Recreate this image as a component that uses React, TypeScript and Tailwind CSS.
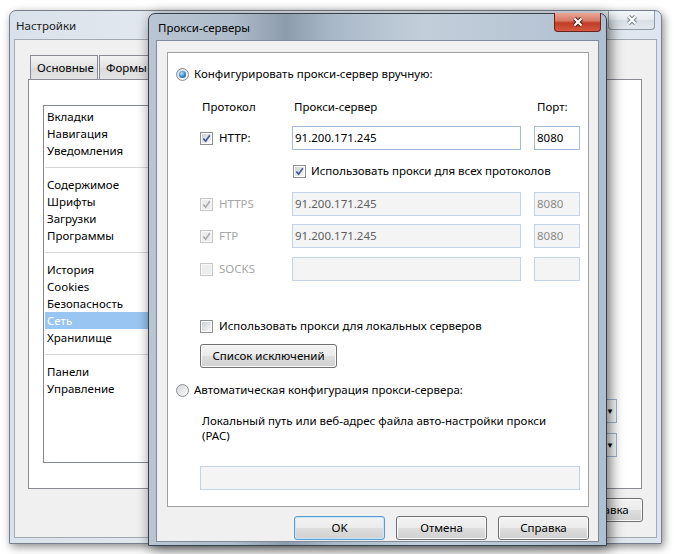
import React from "react";

const ui = "font-['Segoe_UI','Noto_Sans',sans-serif] text-[11.5px] leading-[16px]";

function CheckBox({ checked = false, disabled = false }: { checked?: boolean; disabled?: boolean }) {
  return (
    <span
      className={`flex h-[13px] w-[13px] shrink-0 items-center justify-center border ${
        disabled ? "border-[#c8c8c8] bg-[#f6f6f6]" : "border-[#8e8f8f] bg-white"
      }`}
    >
      <span
        className={`flex h-[9px] w-[9px] items-center justify-center ${
          disabled ? "bg-[#eeeeee]" : "bg-gradient-to-br from-[#cdd1d7] to-[#f8f8f8]"
        }`}
      >
        {checked && (
          <svg viewBox="0 0 9 9" className="h-[9px] w-[9px]">
            <path
              d="M1.3 4.4 L3.6 7.1 L7.8 1.3"
              fill="none"
              stroke={disabled ? "#a9a9a9" : "#3d5a95"}
              strokeWidth="1.6"
            />
          </svg>
        )}
      </span>
    </span>
  );
}

function Radio({ checked = false }: { checked?: boolean }) {
  return (
    <span className="flex h-[13px] w-[13px] shrink-0 items-center justify-center rounded-full border border-[#8b8d8f] bg-gradient-to-br from-[#d3d6db] to-[#fbfbfb]">
      {checked && (
        <span className="h-[7px] w-[7px] rounded-full bg-[radial-gradient(circle_at_40%_35%,#c4ecff_0%,#3d93d4_45%,#0f4a87_100%)]" />
      )}
    </span>
  );
}

function TextBox({ value = "", disabled = false, width }: { value?: string; disabled?: boolean; width: string }) {
  return (
    <div
      className={`flex h-[24px] shrink-0 items-center border px-[2px] ${width} ${
        disabled ? "border-[#c4d4e5] bg-[#f4f4f4] text-[#5f5f5f]" : "border-[#a3bbd6] bg-white text-black"
      }`}
    >
      {value}
    </div>
  );
}

function PortBox({ value = "", disabled = false }: { value?: string; disabled?: boolean }) {
  return (
    <div
      className={`ml-[13px] flex h-[24px] w-[46px] shrink-0 items-center border px-[2px] ${
        disabled ? "border-[#c4d4e5] bg-[#f4f4f4] text-[#8a8a8a]" : "border-[#a3bbd6] bg-white text-black"
      }`}
    >
      {value}
    </div>
  );
}

function Button({ label, isDefault = false, width }: { label: string; isDefault?: boolean; width: string }) {
  return (
    <div
      className={`flex h-[24px] shrink-0 items-center justify-center rounded-[3px] border text-black ${width} ${
        isDefault
          ? "border-[#5c9ccc] shadow-[inset_0_0_0_1px_#c6e6fa]"
          : "border-[#707070] shadow-[inset_0_0_0_1px_#fbfbfb]"
      } bg-[linear-gradient(#f3f3f3_0%,#ebebeb_50%,#dedede_51%,#d0d0d0_100%)]`}
    >
      {label}
    </div>
  );
}

function CloseButton({ active }: { active: boolean }) {
  return (
    <div
      className={`flex h-[19px] w-[47px] shrink-0 items-center justify-center rounded-b-[4px] border border-t-0 ${
        active
          ? "border-[#6b2219] bg-[linear-gradient(#eaa696_0%,#d77a66_42%,#c23b27_55%,#d45a42_100%)]"
          : "border-[#8e9aa7] bg-[linear-gradient(#f4f6f8_0%,#e6ebf0_50%,#d7dee6_51%,#e3e8ee_100%)]"
      }`}
    >
      <svg viewBox="0 0 14 12" className="h-[12px] w-[14px]">
        <path d="M3.5 2.5 L10.5 9.5 M10.5 2.5 L3.5 9.5" stroke={active ? "#4a1a12" : "#727c87"} strokeWidth="4.2" />
        <path d="M3.5 2.5 L10.5 9.5 M10.5 2.5 L3.5 9.5" stroke="#ffffff" strokeWidth="2.2" />
      </svg>
    </div>
  );
}

const navGroups = [
  ["Вкладки", "Навигация", "Уведомления"],
  ["Содержимое", "Шрифты", "Загрузки", "Программы"],
  ["История", "Cookies", "Безопасность", "Сеть", "Хранилище"],
  ["Панели", "Управление"],
];

function SettingsWindow() {
  return (
    <div className="absolute left-[9px] top-[10px] flex h-[534px] w-[653px] flex-col rounded-t-[7px] border border-[#75808c] bg-[linear-gradient(90deg,#d9e1ea_0%,#e6ebf1_30%,#eef2f6_60%,#dde5ee_100%)] px-[4px] pb-[5px] shadow-[2px_3px_8px_rgba(0,0,0,0.45)]">
      <div className="flex h-[28px] shrink-0 items-start">
        <span className="ml-[2px] mt-[7px] text-[#1b1b1b]">Настройки</span>
        <div className="ml-auto mr-[2px]">
          <CloseButton active={false} />
        </div>
      </div>
      <div className="flex flex-1 flex-col border border-[#a2abb5] bg-[#f0f0f0] pl-[13px] pt-[15px]">
        {/* Tabs */}
        <div className="ml-[2px] flex h-[24px] gap-[1px]">
          <div className="flex h-[25px] w-[68px] items-center border border-[#898c95] bg-[linear-gradient(#f3f3f3,#e3e3e3_50%,#dadada_51%,#e4e4e4)] pl-[6px]">
            Основные
          </div>
          <div className="flex h-[25px] w-[70px] items-center border border-[#898c95] bg-[linear-gradient(#f3f3f3,#e3e3e3_50%,#dadada_51%,#e4e4e4)] pl-[6px]">
            Формы
          </div>
        </div>
        {/* Tab panel */}
        <div className="flex h-[410px] w-[614px] border border-[#898c95] bg-white">
          <div className="ml-[14px] mt-[25px] h-[358px] w-[290px] border border-[#828790] bg-white pt-[2px]">
            {navGroups.map((group, gi) => (
              <div key={gi}>
                {gi > 0 && (
                  <div className="flex h-[17px] items-center px-[1px]">
                    <div className="h-[1px] w-full bg-[#d6d6d6]" />
                  </div>
                )}
                {group.map((item) => (
                  <div
                    key={item}
                    className={`mx-[1px] flex h-[17px] items-center pl-[2px] ${
                      item === "Сеть" ? "bg-[#98c5f1] text-white" : "text-black"
                    }`}
                  >
                    {item}
                  </div>
                ))}
              </div>
            ))}
          </div>
          <div className="flex flex-1 flex-col items-end gap-[10px] pr-[24px] pt-[319px]">
            <div className="flex h-[24px] w-[150px] items-center justify-end border border-[#a3bbd6] bg-white">
              <span className="flex h-full w-[12px] items-center justify-center text-[8px] text-black">▼</span>
            </div>
            <div className="flex h-[24px] w-[150px] items-center justify-end border border-[#a3bbd6] bg-white">
              <span className="flex h-full w-[12px] items-center justify-center text-[8px] text-black">▼</span>
            </div>
          </div>
        </div>
        <div className="mr-[13px] mt-[9px] flex justify-end">
          <Button label="Справка" width="w-[75px]" />
        </div>
      </div>
    </div>
  );
}

function ProxyRow({
  label,
  value,
  port,
  checked,
  disabled = false,
}: {
  label: string;
  value: string;
  port: string;
  checked: boolean;
  disabled?: boolean;
}) {
  return (
    <div className="flex h-[24px] items-center pl-[32px]">
      <CheckBox checked={checked} disabled={disabled} />
      <span className={`ml-[6px] w-[73px] shrink-0 ${disabled ? "text-[#a6a6a6]" : "text-black"}`}>{label}</span>
      <TextBox value={value} disabled={disabled} width="w-[229px]" />
      <PortBox value={port} disabled={disabled} />
    </div>
  );
}

function ProxyDialog() {
  return (
    <div className="absolute left-[148px] top-[13px] flex h-[533px] w-[459px] flex-col rounded-t-[7px] border border-[#36424f] bg-[linear-gradient(90deg,#b9c5d1_0%,#aebccb_18%,#8d9cad_30%,#a9b8c8_40%,#c2ceda_60%,#b7c5d4_85%,#aebfd0_100%)] px-[7px] pb-[3px] shadow-[3px_3px_14px_rgba(0,0,0,0.6)]">
      <div className="flex h-[26px] shrink-0 items-start">
        <span className="ml-[2px] mt-[6px] text-black">Прокси-серверы</span>
        <div className="-mr-[2px] -mt-[1px] ml-auto">
          <CloseButton active />
        </div>
      </div>
      <div className="flex flex-1 flex-col border border-[#7d8b9b] bg-[#f0f0f0] pl-[10px] pt-[11px]">
        <div className="flex h-[455px] w-[422px] flex-col border border-[#a0a0a0] bg-white">
          <div className="mt-[13px] flex h-[16px] items-center gap-[5px] pl-[8px]">
            <Radio checked />
            <span>Конфигурировать прокси-сервер вручную:</span>
          </div>

          <div className="mt-[17px] flex h-[16px] items-center pl-[34px]">
            <span className="w-[92px] shrink-0">Протокол</span>
            <span className="w-[243px] shrink-0">Прокси-сервер</span>
            <span>Порт:</span>
          </div>

          <div className="mt-[11px]">
            <ProxyRow label="HTTP:" value="91.200.171.245" port="8080" checked />
          </div>

          <div className="mt-[9px] flex h-[24px] items-center gap-[5px] pl-[125px]">
            <CheckBox checked />
            <span>Использовать прокси для всех протоколов</span>
          </div>

          <div className="mt-[9px]">
            <ProxyRow label="HTTPS" value="91.200.171.245" port="8080" checked disabled />
          </div>
          <div className="mt-[8px]">
            <ProxyRow label="FTP" value="91.200.171.245" port="8080" checked disabled />
          </div>
          <div className="mt-[9px]">
            <ProxyRow label="SOCKS" value="" port="" checked={false} disabled />
          </div>

          <div className="mt-[37px] flex h-[16px] items-center gap-[6px] pl-[32px]">
            <CheckBox />
            <span>Использовать прокси для локальных серверов</span>
          </div>

          <div className="mt-[10px] pl-[32px]">
            <Button label="Список исключений" width="w-[137px]" />
          </div>

          <div className="mt-[14px] flex h-[16px] items-center gap-[5px] pl-[8px]">
            <Radio />
            <span>Автоматическая конфигурация прокси-сервера:</span>
          </div>

          <div className="mt-[15px] pl-[34px] leading-[15px]">
            Локальный путь или веб-адрес файла авто-настройки прокси
            <br />
            (PAC)
          </div>

          <div className="mt-[23px] pl-[32px]">
            <TextBox disabled width="w-[380px]" />
          </div>
        </div>

        <div className="mt-[9px] flex gap-[11px] pl-[127px]">
          <Button label="OK" isDefault width="w-[91px]" />
          <Button label="Отмена" width="w-[91px]" />
          <Button label="Справка" width="w-[91px]" />
        </div>
      </div>
    </div>
  );
}

export default function App() {
  return (
    <div className={`relative h-[554px] w-[674px] overflow-hidden bg-white text-black ${ui}`}>
      <SettingsWindow />
      <ProxyDialog />
    </div>
  );
}
